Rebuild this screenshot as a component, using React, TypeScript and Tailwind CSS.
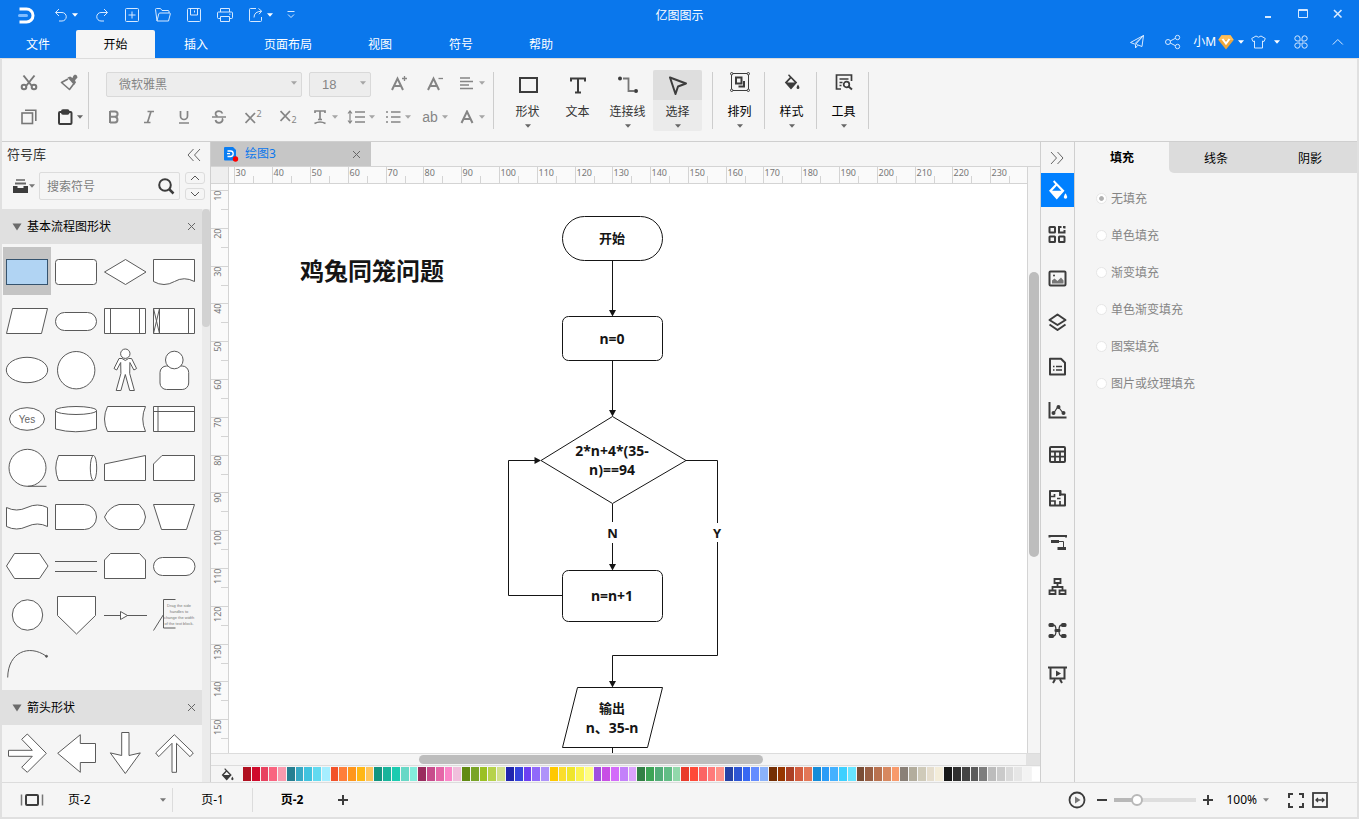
import React, { useState } from "react";
import type { ReactNode } from "react";

const PALETTE = [
  "#b01020", "#cf0a2c", "#e8425f", "#f96480", "#f99aae",
  "#267f91", "#38a9c4", "#41c3df", "#62daf0", "#a6eeff",
  "#f2522a", "#ff7e39", "#ff961c", "#ffb715", "#ffc55b",
  "#139580", "#19b49b", "#1ccbb0", "#67d8c6", "#84ebdc",
  "#9a2c5e", "#c84c8c", "#e566a8", "#fb86c8", "#f0bfdc",
  "#628a13", "#79a428", "#9bc024", "#b6d24c", "#d1e08d",
  "#2025ae", "#3544dc", "#6d40f2", "#9069fa", "#ae92fa",
  "#ffc800", "#fbdd2c", "#efe52c", "#faf350", "#fffd84",
  "#9f4fdf", "#c84fe5", "#d36bfa", "#c380fa", "#dba3fc",
  "#328045", "#3da456", "#52ad78", "#62bd86", "#92d8ab",
  "#e93a2b", "#ff4a38", "#fb6464", "#ff7a7a", "#ff9288",
  "#2542a5", "#2e56d3", "#3768f3", "#648cff", "#8bb2fa",
  "#742f04", "#973600", "#ab4025", "#d35e40", "#e37757",
  "#158cd8", "#2a9cf7", "#44b1ff", "#3dd0ff", "#67e4ff",
  "#7a4d36", "#985f44", "#b97250", "#d78860", "#f89a6c",
  "#8a8077", "#b3ad9d", "#cfcab9", "#e5ddcd", "#f3ecd9",
  "#181818", "#303030", "#444444", "#5a5a5a", "#7d7d7d",
  "#bcbcbc", "#cacaca", "#dadada", "#e6e6e6", "#f3f3f3",
  "#ffffff",
];

type IconProps = { w?: number; h?: number; sw?: number; className?: string; children: ReactNode };

function Icon({ w = 20, h = 20, sw = 2, className = "", children }: IconProps) {
  return (
    <svg
      width={w}
      height={h}
      viewBox={`0 0 ${w} ${h}`}
      fill="none"
      stroke="currentColor"
      strokeWidth={sw}
      className={`shrink-0 ${className}`}
      aria-hidden="true"
    >
      {children}
    </svg>
  );
}

function Caret({ className = "" }: { className?: string }) {
  return (
    <svg width="6" height="4" viewBox="0 0 6 4" className={`shrink-0 ${className}`} aria-hidden="true">
      <path d="M0 0.300h6L3 3.800z" fill="currentColor" />
    </svg>
  );
}

function HeadButton({ label, className = "", children }: { label: string; className?: string; children: ReactNode }) {
  return (
    <button aria-label={label} className={`flex h-7 items-center ${className}`}>
      {children}
    </button>
  );
}

const TABS = [
  { name: "文件", cls: "w-[76px]" },
  { name: "开始", cls: "w-[79px]" },
  { name: "插入", cls: "w-[82px]" },
  { name: "页面布局", cls: "w-[102px]" },
  { name: "视图", cls: "w-[82px]" },
  { name: "符号", cls: "w-20" },
  { name: "帮助", cls: "w-20" },
];

function Header() {
  return (
    <header className="flex h-[58px] shrink-0 bg-[#0a77ec] text-[#d6e9ff]">
      <div className="flex flex-1 flex-col">
        <div className="flex h-[30px] items-center pl-[18px]">
          <svg width="17" height="17" viewBox="0 0 17 17" fill="none" stroke="#fff" strokeWidth="3" aria-hidden="true">
            <path d="M1.500 2H8.500a6.500 6.500 0 0 1 0 13H1.500" strokeLinejoin="round" />
            <path d="M1.500 8.500h7" stroke="#7fbcff" strokeLinecap="round" />
          </svg>
          <HeadButton label="撤销" className="ml-[19px] w-[31px] gap-1">
            <Icon w={14} h={16} sw={1}>
              <path d="M5 2 1.500 5.500 5 9M1.700 5.500H8a4 4 0 0 1 0 8.500H5" />
            </Icon>
            <Caret className="text-white" />
          </HeadButton>
          <HeadButton label="重做" className="w-[34px] justify-center">
            <Icon w={14} h={16} sw={1}>
              <path d="m9 2 3.500 3.500L9 9M12.300 5.500H6a4 4 0 0 0 0 8.500h3" />
            </Icon>
          </HeadButton>
          <HeadButton label="新建" className="w-[26px] justify-center">
            <Icon w={14} h={14} sw={1}>
              <rect x="0.500" y="0.500" width="13" height="13" rx="1" />
              <path d="M7 3.500v7M3.500 7h7" />
            </Icon>
          </HeadButton>
          <HeadButton label="打开" className="w-9 justify-center">
            <Icon w={16} h={14} sw={1}>
              <path d="M2 13 .5 1.500Q.5.500 1.500.500h4l1.500 2h6q1 0 1 1V5M2 13h11.500L15.300 6q.2-1-.8-1H5Q4 5 3.700 6z" />
            </Icon>
          </HeadButton>
          <HeadButton label="保存" className="w-[26px] justify-center">
            <Icon w={14} h={14} sw={1}>
              <rect x="0.500" y="0.500" width="13" height="13" rx="1" />
              <path d="M3.500.500v6.500h7V.500M7.500 2.500v2" />
            </Icon>
          </HeadButton>
          <HeadButton label="打印" className="w-9 justify-center">
            <Icon w={16} h={14} sw={1}>
              <path d="M3.500 4V.500h9V4M3.500 10.500H1.500Q.500 10.500.500 9.500V5Q.500 4 1.500 4h13q1 0 1 1v4.500q0 1-1 1h-2M3.500 8.500h9v5h-9zM12 6.200h1.500" />
            </Icon>
          </HeadButton>
          <HeadButton label="导出" className="w-9 justify-center gap-1">
            <Icon w={14} h={14} sw={1}>
              <path d="M7 .500H1.500q-1 0-1 1v11q0 1 1 1h10q1 0 1-1V9M5 9.500Q5 3.500 12.500 3.200M9.500.500l3.200 2.700L10 6.200" />
            </Icon>
            <Caret className="text-white" />
          </HeadButton>
          <HeadButton label="自定义快速访问" className="w-6 justify-center">
            <Icon w={8} h={8} sw={1}>
              <path d="M.500.500h7M1 3.500l3 3 3-3" />
            </Icon>
          </HeadButton>
        </div>
        <nav className="flex h-7 text-xs text-white">
          {TABS.map((t) => (
            <button
              key={t.name}
              className={`${t.cls} h-7 pt-[2px] ${t.name === "开始" ? "rounded-t-[2px] bg-[#f5f5f5] text-black" : ""}`}
            >
              {t.name}
            </button>
          ))}
        </nav>
      </div>
      <h1 className="flex h-8 items-center text-xs text-white">亿图图示</h1>
      <div className="flex flex-1 flex-col items-end">
        <div className="flex h-7 items-center pr-1">
          <HeadButton label="最小化" className="w-[35px] justify-center">
            <Icon w={10} h={10}>
              <path d="M2 8h6" />
            </Icon>
          </HeadButton>
          <HeadButton label="最大化" className="w-[35px] justify-center">
            <Icon w={10} h={10} sw={1}>
              <path d="M.500.500h9v8h-9zM.500 1.500h9" />
            </Icon>
          </HeadButton>
          <HeadButton label="关闭" className="w-[35px] justify-center">
            <Icon w={10} h={10} sw={1.6}>
              <path d="m1 1 7.500 7.500M8.500 1 1 8.500" />
            </Icon>
          </HeadButton>
        </div>
        <div className="flex h-7 items-center pr-1">
          <HeadButton label="发送" className="w-9 justify-center">
            <Icon w={14} h={14} sw={1}>
              <path d="M13.500.500.500 7.500l4 1.500zM13.500.500l-1.500 11L6.500 9.500M13.500.500l-8 9v3.500l2-2.500" strokeLinejoin="round" />
            </Icon>
          </HeadButton>
          <HeadButton label="分享" className="w-9 justify-center">
            <Icon w={16} h={16} sw={1}>
              <circle cx="3" cy="8" r="2.500" />
              <circle cx="12.500" cy="3.500" r="2.200" />
              <circle cx="12.500" cy="12.500" r="2.200" />
              <path d="m5.200 7 5.200-2.700M5.200 9l5.200 2.700" />
            </Icon>
          </HeadButton>
          <HeadButton label="账户" className="w-[54px] justify-end pr-px text-xs text-white">
            <span>小M</span>
            <svg width="16" height="15" viewBox="0 0 16 15" className="ml-[2px] shrink-0" aria-hidden="true">
              <path d="M3.500.300h9L15.700 5 8 14.500.300 5z" fill="#eea63c" />
              <path d="M3.500.300h9L15.700 5H.300z" fill="#ffbe55" />
              <path d="m4.500 4 3.500 4.500L11.500 4" fill="none" stroke="#fff" strokeWidth="2" />
            </svg>
            <Caret className="ml-1 text-white" />
          </HeadButton>
          <HeadButton label="皮肤" className="w-9 justify-end gap-2 pr-px">
            <Icon w={15} h={14} sw={1}>
              <path d="M5 1 .700 3.500 2 6.500l1.500-.500v7h8v-7l1.500.500 1.300-3L10 1Q7.500 3.500 5 1z" strokeLinejoin="round" />
            </Icon>
            <Caret className="text-white" />
          </HeadButton>
          <HeadButton label="应用" className="w-10 justify-center">
            <Icon w={14} h={14} sw={1}>
              <path d="M6 6H3.200A2.600 2.600 0 1 1 6 3.200zM8 6V3.200A2.600 2.600 0 1 1 10.800 6zM6 8v2.800A2.600 2.600 0 1 1 3.200 8zM8 8h2.800A2.600 2.600 0 1 1 8 10.800z" />
            </Icon>
          </HeadButton>
          <HeadButton label="收起功能区" className="w-[34px] justify-center">
            <Icon w={12} h={8} sw={1}>
              <path d="m.800 6.500 5-5 5 5" />
            </Icon>
          </HeadButton>
        </div>
      </div>
    </header>
  );
}

function Cell({ label, caret, className = "w-[35px] justify-center", children }: { label: string; caret?: boolean; className?: string; children: ReactNode }) {
  return (
    <button aria-label={label} className={`flex h-[34px] items-center gap-1 ${className}`}>
      {children}
      {caret && <Caret className="opacity-70" />}
    </button>
  );
}

function BigTool({ label, caret = true, wide, active, icon }: { label: string; caret?: boolean; wide?: boolean; active?: boolean; icon: ReactNode }) {
  return (
    <button
      className={`flex h-[61px] w-[49px] flex-col items-center rounded-[2px] ${wide ? "text-black" : "text-[#333]"} ${active ? "bg-[#ebebeb]" : ""}`}
    >
      <span className={`flex h-[30px] w-full items-center justify-center rounded-t-[2px] text-[#3c3c3c] ${active ? "bg-[#dedede]" : ""} ${wide ? "pb-[5px]" : ""}`}>
        {icon}
      </span>
      <span className="flex h-6 items-center text-xs whitespace-nowrap">{label}</span>
      {caret && <Caret className="text-[#666]" />}
    </button>
  );
}

function Divider() {
  return <span className="h-[57px] w-px bg-[#cdcdcd]" />;
}

function Toolbar() {
  return (
    <div className="flex h-[84px] shrink-0 items-center border-t border-b border-t-[#dcdcdc] border-b-[#cfcfcf] bg-[#f5f5f5]">
      <div className="grid grid-cols-[40px_39px] pl-[7px] text-[#777]">
        <Cell label="剪切" className="w-10 justify-center">
          <Icon w={18} h={18}>
            <path d="M3.500 1.500 11.500 11.500M14.500 1.500l-8 10" />
            <circle cx="4" cy="13" r="2.300" />
            <circle cx="14" cy="13" r="2.300" />
          </Icon>
        </Cell>
        <Cell label="格式刷" className="w-10 justify-center">
          <Icon w={18} h={18}>
            <path d="M8 5 1.500 8.500 9.500 15.500l4.500-6" strokeWidth="1.600" strokeLinejoin="round" />
            <path d="m7.500 3.500 2.700-1 2.300 1.500Q13 1 15 .500q2.500.500 2.500 3L15 6.200l1 2.300-2 2.500z" fill="currentColor" stroke="none" />
          </Icon>
        </Cell>
        <Cell label="复制" className="w-10 justify-center">
          <Icon w={16} h={16} sw={1.6}>
            <rect x="1" y="4" width="10.500" height="10.500" />
            <path d="M4 1.200h10.800V12" />
          </Icon>
        </Cell>
        <Cell label="粘贴" className="w-10 pl-[9px] text-[#3c3c3c]">
          <Icon w={15} h={16}>
            <rect x="1" y="3" width="12.500" height="12" rx="1" />
            <rect x="4" y="1.200" width="6.500" height="3.500" rx="1" />
          </Icon>
          <Caret className="text-[#666]" />
        </Cell>
      </div>
      <Divider />
      <div className="flex w-[404px] flex-col pl-[7px] text-[#858585]">
        <div className="flex h-[34px] items-center">
          <label className="relative ml-[10px] block h-[25px] w-[196px]">
            <select aria-label="字体" className="h-full w-full appearance-none rounded-[2px] border border-[#d9d9d9] bg-[#ededed] pl-3 text-xs text-[#858585]">
              <option>微软雅黑</option>
            </select>
            <Caret className="pointer-events-none absolute top-[10px] right-[5px] text-[#a5a5a5]" />
          </label>
          <label className="relative ml-[7px] block h-[25px] w-[62px]">
            <select aria-label="字号" className="h-full w-full appearance-none rounded-[2px] border border-[#d9d9d9] bg-[#ededed] pl-3 font-['Liberation_Sans',sans-serif] text-[13px] text-[#858585]">
              <option>18</option>
            </select>
            <Caret className="pointer-events-none absolute top-[10px] right-[5px] text-[#a5a5a5]" />
          </label>
          <Cell label="增大字号" className="ml-[10px] w-9 justify-center">
            <Icon w={18} h={16}>
              <path d="M2 15 7.500 3.500 13 15M4 11h7" />
              <path d="M14.500 1v5M12 3.500h5" strokeWidth="1.300" />
            </Icon>
          </Cell>
          <Cell label="减小字号" className="w-9 justify-center">
            <Icon w={18} h={16}>
              <path d="M2 15 7.500 3.500 13 15M4 11h7" />
              <path d="M12.500 3.500h4.500" strokeWidth="1.300" />
            </Icon>
          </Cell>
          <Cell label="对齐" caret className="ml-[2px] w-[37px] pl-1">
            <Icon w={16} h={14}>
              <path d="M1 2h10M1 5.500h13M1 9h9M1 12.500h13" strokeWidth="1.600" />
            </Icon>
          </Cell>
        </div>
        <div className="flex h-[34px] items-center">
          <Cell label="加粗">
            <Icon w={12} h={14}>
              <path d="M2 1v12M2 1.500h5a2.600 2.600 0 0 1 0 5.200H2M7 6.700a3 3 0 0 1 0 5.900H2" />
            </Icon>
          </Cell>
          <Cell label="斜体">
            <Icon w={12} h={14} sw={1.7}>
              <path d="M4.500 1.500H11M1 12.500h6.500M8 1.500l-3.500 11" />
            </Icon>
          </Cell>
          <Cell label="下划线">
            <Icon w={12} h={14} sw={1.7}>
              <path d="M2.500 1v5a3.500 3.500 0 0 0 7 0V1M1 13h10" />
            </Icon>
          </Cell>
          <Cell label="删除线">
            <Icon w={14} h={14} sw={1.7}>
              <path d="M10.500 3.500Q9.500 1.200 7 1.200 3.500 1.200 3.500 4q0 1.500 2 2.300M0 7h14M3.500 10q.500 2.800 3.500 2.800T10.700 10q0-1-.7-1.700" />
            </Icon>
          </Cell>
          <Cell label="上标">
            <span className="flex items-start">
              <Icon w={11} h={16} sw={1.8}>
                <path d="m.500 4 9.500 10M10 4 .500 14" />
              </Icon>
              <span className="text-[9px] leading-[10px]">2</span>
            </span>
          </Cell>
          <Cell label="下标">
            <span className="flex items-end">
              <Icon w={11} h={16} sw={1.8}>
                <path d="m.500 2 9.500 10M10 2 .500 12" />
              </Icon>
              <span className="text-[9px] leading-[10px]">2</span>
            </span>
          </Cell>
          <Cell label="文字方向" caret className="w-[37px] pl-[7px]">
            <Icon w={15} h={16} sw={1.7}>
              <path d="M2 4V2h10v2M7 2v8.500M5 10.500h4M1.500 14.500q5.500-3 11 0" />
            </Icon>
          </Cell>
          <Cell label="行距" caret className="w-[37px] pl-1">
            <Icon w={18} h={14} sw={1.7}>
              <path d="M8 2h10M8 7h10M8 12h10" />
              <path d="M3 1v12M1 3.500l2-2.500 2 2.500M1 10.500 3 13l2-2.500" strokeWidth="1.200" />
            </Icon>
          </Cell>
          <Cell label="项目符号" caret className="w-[37px] pl-[6px]">
            <Icon w={15} h={14} sw={1.7}>
              <path d="M0 2h2M0 7h2M0 12h2M5 2h9.500M5 7h9.500M5 12h9.500" />
            </Icon>
          </Cell>
          <Cell label="突出显示" caret className="w-[37px] pl-[5px]">
            <span className="w-4 font-['Liberation_Sans',sans-serif] text-sm">ab</span>
          </Cell>
          <Cell label="字体颜色" caret className="w-[37px] pl-[6px]">
            <Icon w={15} h={14}>
              <path d="M1.500 13 7 1.500 12.500 13M3.500 9h7" />
            </Icon>
          </Cell>
        </div>
      </div>
      <Divider />
      <div className="flex gap-px pr-[10px] pl-[9px]">
        <BigTool label="形状" icon={<Icon w={20} h={20}><rect x="2" y="3" width="17" height="14" /></Icon>} />
        <BigTool label="文本" caret={false} icon={<Icon w={20} h={20}><path d="M3 6.500V3.500h14v3M10 3.500v14M7 17.500h6" /></Icon>} />
        <BigTool
          label="连接线"
          icon={
            <Icon w={20} h={20}>
              <path d="M5 3.500h5.500v12.500H16" stroke="#777" strokeWidth="1.800" />
              <circle cx="2" cy="3.500" r="2" fill="currentColor" stroke="none" />
              <circle cx="18" cy="16" r="2" fill="currentColor" stroke="none" />
            </Icon>
          }
        />
        <BigTool label="选择" active icon={<Icon w={20} h={20}><path d="m2 2.500 16 6-8 3L7.500 19z" strokeLinejoin="round" /></Icon>} />
      </div>
      <Divider />
      <div className="flex items-center">
        <div className="pl-[2px]">
          <BigTool
            wide
            label="排列"
            icon={
              <Icon w={20} h={20} sw={1}>
                <path d="M1.500 1.500h17v17h-17z" />
                <path d="M6 5.500h5.500v6H6zM14 9v5.500H8.500" strokeWidth="2" />
                <g fill="#f5f5f5">
                  <circle cx="1.700" cy="1.700" r="1.200" />
                  <circle cx="18.300" cy="1.700" r="1.200" />
                  <circle cx="1.700" cy="18.300" r="1.200" />
                  <circle cx="18.300" cy="18.300" r="1.200" />
                </g>
              </Icon>
            }
          />
        </div>
        <Divider />
        <div className="pl-[2px]">
          <BigTool wide label="样式" icon={<Bucket />} />
        </div>
        <Divider />
        <div className="pl-[2px]">
          <BigTool
            wide
            label="工具"
            icon={
              <Icon w={18} h={18}>
                <path d="M6 16H1.500V2h15v6M4.500 6h9M4.500 9.500h3M4.500 12.500h2" strokeWidth="1.700" />
                <circle cx="11.500" cy="11.500" r="2.800" strokeWidth="1.700" />
                <path d="m13.500 13.500 3.500 3" />
              </Icon>
            }
          />
        </div>
        <Divider />
      </div>
    </div>
  );
}

function Bucket({ size = 16 }: { size?: number }) {
  return (
    <svg width={size} height={size} viewBox="0 0 16 16" className="shrink-0" aria-hidden="true">
      <path
        fillRule="evenodd"
        d="M5 .200 13.200 8.500 7 15.500.800 8.500 5.800 3.300 4 1.300zM7 4.600 3.300 8.500h7.400z"
        fill="currentColor"
      />
      <path d="M14 10.500q2.800 4 0 4.500-2.800-.500 0-4.500z" fill="currentColor" />
    </svg>
  );
}

const SHAPES: { name: string; art: ReactNode }[] = [
  { name: "流程", art: <rect x="3.500" y="12.500" width="41" height="25" fill="#b1d4f3" stroke="#35536e" /> },
  { name: "圆角矩形", art: <rect x="3.500" y="12.500" width="41" height="25" rx="3" /> },
  { name: "判定", art: <path d="M3.500 25 24.500 12.500 45 25 24.500 37.500z" /> },
  { name: "文档", art: <path d="M3.500 34.500v-22h41v22Q34 29 24.500 34.500 14 40.500 3.500 34.500z" /> },
  { name: "数据", art: <path d="M9.500 12.500h35l-6 25h-35z" /> },
  { name: "开始/结束", art: <rect x="3.500" y="16.500" width="41" height="18" rx="9" /> },
  { name: "预定义流程", art: <path d="M3.500 12.500h41v25h-41zM9.500 12.500v25M38.500 12.500v25" /> },
  { name: "子流程", art: <path d="M3.500 12.500h41v25h-41zM9.500 12.500v25M38.500 12.500v25M3.500 12.500l6 25M9.500 12.500l-6 25" /> },
  { name: "椭圆", art: <ellipse cx="24" cy="25" rx="20.700" ry="12.700" /> },
  { name: "圆", art: <circle cx="24.200" cy="25.200" r="18.700" /> },
  {
    name: "人物",
    art: (
      <>
        <circle cx="24.300" cy="8.700" r="4.700" />
        <path d="M18 13.500h3l3.300 2 3.300-2h3l5 10-2.700 1.500-4-7.500-.200 11 4.700 17h-4.700l-4.400-16-4.400 16h-4.700l4.700-17-.200-11-4 7.500-2.700-1.500z" />
      </>
    ),
  },
  {
    name: "角色",
    art: (
      <>
        <rect x="10" y="21" width="28.700" height="23.500" rx="6.500" />
        <circle cx="24.300" cy="15" r="8.800" />
      </>
    ),
  },
  {
    name: "是",
    art: (
      <>
        <ellipse cx="24" cy="25" rx="17.500" ry="11.300" />
        <text x="24" y="28.500" fontSize="10" textAnchor="middle" fill="#666" stroke="none" className="font-['Liberation_Sans',sans-serif]">Yes</text>
      </>
    ),
  },
  {
    name: "数据库",
    art: (
      <>
        <path d="M3.500 16.500V35q20 5.500 41 0V16.500" />
        <ellipse cx="24" cy="16.500" rx="20.500" ry="4" />
      </>
    ),
  },
  { name: "存储数据", art: <path d="M6.500 12.500h38q-5.500 12.500 0 25h-38q-6-12.500 0-25z" /> },
  { name: "内部存储", art: <path d="M3.500 12.500h41v25h-41zM3.500 17.500h41M8 12.500v25" /> },
  { name: "顺序数据", art: <><circle cx="24.500" cy="24.800" r="18.500" /><path d="M24.500 43.300h19" /></> },
  { name: "直接数据", art: <><path d="M41.500 12.500h-35q-5.500 12.500 0 25h35" /><ellipse cx="41.500" cy="25" rx="3.200" ry="12.500" /></> },
  { name: "手动输入", art: <path d="M3.500 21 44.500 12.500v25h-41z" /> },
  { name: "卡片", art: <path d="M12 12.500h32.500v25h-41V21z" /> },
  { name: "纸带", art: <path d="M3.500 15.500q10 5 20.500 0t20.500 0v19q-10-5-20.500 0t-20.500 0z" /> },
  { name: "延迟", art: <path d="M3.500 12.500h29a12 12.500 0 0 1 0 25h-29z" /> },
  { name: "显示", art: <path d="M18 12.500h20q13 12.500 0 25H18Q8 35 3.500 25 8 15 18 12.500z" /> },
  { name: "手动操作", art: <path d="M3.500 12.500h41l-8 25H11.500z" /> },
  { name: "准备", art: <path d="M11.500 12.500h25L45 25l-8.500 12.500h-25L3.500 25z" /> },
  { name: "并行模式", art: <path d="M3 20.500h42M3 30.500h42" /> },
  { name: "循环限值", art: <path d="M9.500 12.500h29l6 6.500v18.500h-41V19z" /> },
  { name: "终端", art: <rect x="3.500" y="16.500" width="41.500" height="18" rx="9" /> },
  { name: "连接点", art: <circle cx="24.500" cy="25" r="15.200" /> },
  { name: "跨页引用", art: <path d="M5.500 6.500h38v19l-19 18.500-19-18.500z" /> },
  { name: "流向", art: <path d="M3 25.500h16.500M26 25.500h20M19.500 21.500l7 4-7 4z" /> },
  {
    name: "批注",
    art: (
      <>
        <path d="M25.500 9.500h-12v28.500h12M13.500 24.500l-10 16" fill="none" />
        <g fontSize="4" textAnchor="middle" fill="#777" stroke="none" className="font-['Liberation_Sans',sans-serif]">
          <text x="29" y="17">Drag the side</text>
          <text x="29" y="23">handles to</text>
          <text x="29" y="28.500">change the width</text>
          <text x="29" y="34.500">of the text block.</text>
        </g>
      </>
    ),
  },
  { name: "弧线", art: <><path d="M4.700 38.500C5 13 26 5 43 17" fill="none" /><circle cx="43.500" cy="17.300" r="1" fill="#555" /></> },
];

const ARROWS: { name: string; art: ReactNode }[] = [
  { name: "右箭头", art: <path d="M5.500 22.300h23.800l-10.600-11 5.600-5.300 19 19.300-19 19-5.600-5 10.600-11H5.500z" /> },
  { name: "左箭头", art: <path d="M5.700 25.300 28.300 6.700v8.800h15.200v19H28.300v9.800z" /> },
  { name: "下箭头", art: <path d="M20.700 4.500H28v23l11.300-2.600-15 20.600-15-20.600 11.400 2.600z" /> },
  { name: "上箭头", art: <path d="M24.300 6.700 43.300 25 40 28.700 26.500 15.300v29h-4.500v-29L8.700 28.700 5.700 25z" /> },
];

function ShapeGrid({ items, selected }: { items: { name: string; art: ReactNode }[]; selected?: string }) {
  return (
    <div className="grid grid-cols-[49px_49px_49px_49px] pt-[3px] pb-[2px] pl-px">
      {items.map((s) => (
        <button key={s.name} aria-label={s.name} className="flex h-[49px]">
          <svg
            width="48"
            height="48"
            viewBox="0 0 48 48"
            fill="#fff"
            stroke="#5a5a5a"
            className={s.name === selected ? "bg-[#c4c4c4]" : ""}
            aria-hidden="true"
          >
            {s.art}
          </svg>
        </button>
      ))}
    </div>
  );
}

function GroupTitle({ name }: { name: string }) {
  return (
    <div className="flex h-[35px] items-center bg-[#e0e0e0] pr-[6px] pl-[10px] text-xs text-black">
      <svg width="10" height="8" viewBox="0 0 10 8" className="mr-[5px]" aria-hidden="true">
        <path d="M.500.500h9L5 7.500z" fill="#6b6b6b" />
      </svg>
      <h2 className="flex-1">{name}</h2>
      <button aria-label={`关闭${name}`} className="text-[#666]">
        <Icon w={9} h={9} sw={1}>
          <path d="m1 1 7 7M8 1 1 8" />
        </Icon>
      </button>
    </div>
  );
}

function Library() {
  return (
    <aside className="flex w-[209px] shrink-0 flex-col border-r border-[#cfcfcf]">
      <div className="flex h-[26px] items-center justify-between pr-[9px] pl-[5px] text-[13px] text-[#333]">
        <span>符号库</span>
        <button aria-label="收起符号库" className="text-[#666]">
          <Icon w={14} h={14} sw={1}>
            <path d="M6.500 1 1 7l5.500 6M13 1 7.500 7l5.500 6" />
          </Icon>
        </button>
      </div>
      <div className="flex h-[41px] shrink-0 items-start pt-1 pr-[5px] pl-[11px]">
        <button aria-label="符号库列表" className="flex h-7 w-[26px] items-center gap-px text-[#3c3c3c]">
          <Icon w={15} h={14} sw={2}>
            <path d="M3 1h9" stroke="#888" />
            <path d="M2 4.500h11" stroke="#666" />
            <path d="M0 7h4.500v2h6V7H15v7H0z" fill="currentColor" stroke="none" />
          </Icon>
          <Caret className="text-[#777]" />
        </button>
        <div className="flex h-7 flex-1 items-center rounded-[2px] border border-[#dcdcdc] pr-1 pl-[7px]">
          <input aria-label="搜索符号" placeholder="搜索符号" className="w-0 flex-1 bg-transparent pt-[2px] text-xs outline-none placeholder:text-[#7d7d7d]" />
          <Icon w={18} h={18} sw={2} className="text-[#3c3c3c]">
            <circle cx="8" cy="8" r="5.800" />
            <path d="m12 12 4.500 4.500" strokeWidth="2.500" />
          </Icon>
        </div>
        <div className="ml-[5px] flex w-5 flex-col gap-1">
          <button aria-label="上一个" className="flex h-3 items-center justify-center rounded-[3px] border border-[#dcdcdc] text-[#555]">
            <Icon w={10} h={6} sw={1}><path d="m1 5 4-4 4 4" /></Icon>
          </button>
          <button aria-label="下一个" className="flex h-3 items-center justify-center rounded-[3px] border border-[#dcdcdc] text-[#555]">
            <Icon w={10} h={6} sw={1}><path d="m1 1 4 4 4-4" /></Icon>
          </button>
        </div>
      </div>
      <div className="flex min-h-0 flex-1">
        <div className="min-h-0 flex-1 overflow-hidden">
          <GroupTitle name="基本流程图形状" />
          <ShapeGrid items={SHAPES} selected="流程" />
          <GroupTitle name="箭头形状" />
          <ShapeGrid items={ARROWS} />
        </div>
        <div className="w-2 bg-[#ebebeb]">
          <div className="h-[118px] rounded-full bg-[#d2d2d2]" />
        </div>
      </div>
    </aside>
  );
}

const TICK = 37.8;

function HorizontalRuler() {
  const marks = Array.from({ length: 21 }, (_, i) => i);
  return (
    <svg width="100%" height="16" className="block text-[#777]" aria-hidden="true">
      {marks.map((i) => {
        const x = Math.round(5.3 + i * TICK) + 0.5;
        return (
          <g key={i}>
            <path d={`M${x} 0v16M${x + 19} 9v7`} stroke="#d4d4d4" />
            <text x={x + 1} y="9" fontSize="9" fill="currentColor">{30 + i * 10}</text>
          </g>
        );
      })}
    </svg>
  );
}

function VerticalRuler() {
  const marks = Array.from({ length: 15 }, (_, i) => i);
  return (
    <svg width="17" height="100%" className="block text-[#777]" aria-hidden="true">
      {marks.map((i) => {
        const y = Math.round(6 + i * TICK) + 0.5;
        return (
          <g key={i}>
            <path d={`M0 ${y}h17M10 ${y + 19}h7`} stroke="#d4d4d4" />
            <text transform={`translate(10 ${y}) rotate(-90)`} textAnchor="end" fontSize="9" fill="currentColor">
              {10 + i * 10}
            </text>
          </g>
        );
      })}
    </svg>
  );
}

function Diagram() {
  return (
    <svg width="798" height="569" viewBox="229 184 798 569" className="block" role="img" aria-label="鸡兔同笼问题流程图">
      <text x="300" y="280" fontSize="24" fontWeight="700" fill="#151515">鸡兔同笼问题</text>
      <g fill="none" stroke="#151515" strokeWidth="1">
        <rect x="562.500" y="216.500" width="100" height="44" rx="22" />
        <rect x="562.500" y="316.500" width="100" height="44" rx="6" />
        <path d="M541 460.500 612.500 416.500 686 460.500 612.500 503.500z" />
        <rect x="562.500" y="570.500" width="100" height="51" rx="6" />
        <path d="M577.500 687.500h85l-15 60h-85z" />
        <path d="M612.500 261v50M612.500 361v50M612.500 504v18M612.500 543v22M612.500 748v6" />
        <path d="M562 595.500h-53.500v-135H536" />
        <path d="M686 460.500h31.500V523M717.500 542v113.500h-105V682" />
      </g>
      <g fill="#151515">
        <path d="M609 310h7l-3.500 6.500zM609 410h7l-3.500 6.500zM609 564h7l-3.500 6.500zM609 681h7l-3.500 6.500zM534.500 457v7l6.500-3.500z" />
      </g>
      <g fontWeight="700" fill="#151515" textAnchor="middle">
        <g fontSize="13">
          <text x="612" y="243">开始</text>
          <text x="612.500" y="538">N</text>
          <text x="717" y="538">Y</text>
          <text x="612" y="713">输出</text>
        </g>
        <g fontSize="14">
          <text x="612" y="344">n=0</text>
          <text x="612" y="456">2*n+4*(35-</text>
          <text x="612" y="475">n)==94</text>
          <text x="612" y="601">n=n+1</text>
          <text x="612" y="733">n、35-n</text>
        </g>
      </g>
    </svg>
  );
}

function Workspace() {
  return (
    <main className="flex min-w-0 flex-1 flex-col">
      <div className="flex h-6 shrink-0">
        <div className="flex w-40 items-center bg-[#c6c6c6] pr-[10px] pl-[13px] text-xs">
          <svg width="15" height="16" viewBox="0 0 15 16" className="mr-[6px] shrink-0" aria-hidden="true">
            <path d="M0 2Q0 1 1 1h8l3 3v9.500q0 1-1 1H1q-1 0-1-1z" fill="#0a7df2" />
            <path d="M3.500 5h3q2.700 0 2.700 2.700T6.500 10.500h-3M3 7.700h3" fill="none" stroke="#fff" strokeWidth="1.300" />
            <circle cx="11.500" cy="13" r="2.700" fill="#f00" />
          </svg>
          <span className="flex-1 text-[#0a77ec]">绘图3</span>
          <button aria-label="关闭绘图3" className="text-[#666]">
            <Icon w={9} h={9} sw={1}>
              <path d="m1 1 7 7M8 1 1 8" />
            </Icon>
          </button>
        </div>
      </div>
      <div className="flex min-h-0 flex-1 border-t border-[#d4d4d4]">
        <div className="flex min-w-0 flex-1 flex-col">
          <div className="flex h-[17px] shrink-0 border-b border-[#d4d4d4] bg-[#fafafa]">
            <div className="w-[18px] shrink-0 border-r border-[#d4d4d4] bg-[#eee]" />
            <div className="min-w-0 flex-1 overflow-hidden">
              <HorizontalRuler />
            </div>
          </div>
          <div className="flex min-h-0 flex-1">
            <div className="w-[18px] shrink-0 overflow-hidden border-r border-[#d4d4d4] bg-[#fafafa]">
              <VerticalRuler />
            </div>
            <div className="min-w-0 flex-1 overflow-hidden bg-white">
              <Diagram />
            </div>
          </div>
        </div>
        <div className="flex w-[13px] shrink-0 flex-col items-center border-l border-[#d4d4d4]">
          <div className="mt-[105px] h-[285px] w-[10px] rounded-full bg-[#bdbdbd]" />
        </div>
      </div>
      <div className="flex h-[13px] shrink-0 border-t border-b border-[#dcdcdc]">
        <div className="flex flex-1 items-center pl-[208px]">
          <div className="h-[9px] w-[344px] rounded-full bg-[#bdbdbd]" />
        </div>
        <div className="w-[14px] bg-[#e2e2e2]" />
      </div>
      <div className="flex h-4 shrink-0 items-center">
        <button aria-label="填充颜色" className="flex w-8 justify-center text-[#3c3c3c]">
          <Bucket size={13} />
        </button>
        <div className="flex h-[14px] flex-1 gap-px">
          {PALETTE.map((c) => (
            <button key={c} aria-label={c} className="flex-1" style={{ backgroundColor: c }} />
          ))}
        </div>
      </div>
    </main>
  );
}

const SIDE_TOOLS: { name: string; art: ReactNode }[] = [
  {
    name: "主题",
    art: (
      <>
        <rect x="1.500" y="2" width="5.500" height="5.500" rx="0.500" />
        <rect x="1.500" y="11.500" width="5.500" height="5.500" rx="0.500" />
        <rect x="11" y="11.500" width="5.500" height="5.500" rx="0.500" />
        <path d="M13.500 2H11v5.500h5.500V5M15 2h2.500M16.500 1v2.500" />
      </>
    ),
  },
  { name: "图片", art: <><rect x="1.500" y="2.500" width="16" height="14" rx="1" /><path d="M4 14.500v-3l2.500-2 3 2.500 3.500-3.500 2.500 3v3z" fill="#777" stroke="none" /><circle cx="6" cy="6.500" r="1" fill="currentColor" stroke="none" /></> },
  { name: "图层", art: <path d="M9.500 1.500 17.500 7l-8 5-8-5zM1.500 11.500l8 5.500 8-5.500" strokeLinejoin="round" /> },
  { name: "备注", art: <><path d="M2 1.800h11l4 4V17.500H2z" strokeLinejoin="round" /><path d="M5 9.500h1.500M5 13h1.500M8 9.500h6M8 13h6" strokeWidth="1.500" /></> },
  { name: "图表", art: <><path d="M1.500 1v15.500H18.500" /><path d="m5.500 12.500 4.500-7 5.500 7" strokeWidth="1.200" /><g fill="currentColor" stroke="none"><circle cx="5.500" cy="12" r="2" /><circle cx="10.500" cy="6" r="2" /><circle cx="15.500" cy="12" r="2" /></g></> },
  { name: "表格", art: <><rect x="2" y="2" width="15" height="15" rx="1" /><path d="M2 6.500h15M2 11.700h15M7 6.500V17M12 6.500V17" strokeWidth="1.800" /></> },
  { name: "平面图", art: <><path d="M2 2h10.500v3.500H17v11H2z" strokeLinejoin="round" /><path d="M2 7.500h4.500V5M2 12h5v4M12 2v5M12 12v4M9 9.500h3.500" strokeWidth="1.700" /></> },
  { name: "甘特图", art: <><path d="M1.500 4.500V3h16.500v1.500" /><path d="M3 8.500h8M9.500 15.500H18" strokeWidth="3" /><path d="M11 8.500h4.500v7" strokeWidth="1" /></> },
  { name: "组织结构", art: <path d="M6.500 2h6v4h-6zM9.500 6v4M4.500 13v-3h10v3M1.500 13.500h6V17h-6zM11.500 13.500h6V17h-6z" strokeWidth="1.800" /> },
  { name: "思维导图", art: <><g fill="currentColor" stroke="none"><rect x="0.500" y="2" width="5.500" height="4" rx="1.500" /><rect x="13" y="2" width="5.500" height="4" rx="1.500" /><rect x="0.500" y="13" width="5.500" height="4" rx="1.500" /><rect x="13" y="13" width="5.500" height="4" rx="1.500" /><rect x="6.500" y="8" width="6" height="3" rx="1" /></g><path d="M5.500 4q2.500 0 2.500 5.500T5.500 15M13.500 4Q11 4 11 9.500t2.500 5.500" strokeWidth="1.300" /></> },
  { name: "演示", art: <><path d="M0 2.500h19M2.500 2.500v11h14v-11M7 14.500l-2 3.500M12 14.500l2 3.500" /><path d="m8 5.500 5 3-5 3z" fill="currentColor" stroke="none" /></> },
];

function SideTools() {
  return (
    <div className="flex w-[35px] shrink-0 flex-col border-x border-[#cfcfcf] text-[#3c3c3c]">
      <button aria-label="收起面板" className="flex h-[31px] shrink-0 items-center justify-center pr-[2px] text-[#666]">
        <Icon w={14} h={14} sw={1}>
          <path d="m1 1 5.500 6L1 13M7.500 1 13 7l-5.500 6" />
        </Icon>
      </button>
      <button aria-label="样式" className="flex h-[34px] shrink-0 items-center justify-center bg-[#0080ff] text-white">
        <Bucket size={20} />
      </button>
      <div className="flex flex-col pt-[5px]">
        {SIDE_TOOLS.map((t) => (
          <button key={t.name} aria-label={t.name} className="flex h-11 items-center justify-center">
            <Icon w={19} h={19} sw={2}>{t.art}</Icon>
          </button>
        ))}
      </div>
    </div>
  );
}

const FILLS = ["无填充", "单色填充", "渐变填充", "单色渐变填充", "图案填充", "图片或纹理填充"];

function FormatPanel() {
  const [fill, setFill] = useState("无填充");
  return (
    <aside className="w-[282px] shrink-0">
      <div className="flex h-[31px] text-xs text-black">
        <button className="flex-1 font-bold">填充</button>
        <button className="flex-1 rounded-bl-[5px] bg-[#dcdcdc] pt-[2px]">线条</button>
        <button className="flex-1 bg-[#dcdcdc] pt-[2px]">阴影</button>
      </div>
      <div className="flex flex-col pt-[7px] pl-[21px]">
        {FILLS.map((f) => (
          <label key={f} className="flex h-[37px] items-center gap-1 text-xs text-[#858585]">
            <input
              type="radio"
              name="fill"
              checked={fill === f}
              onChange={() => setFill(f)}
              className="size-[11px] appearance-none rounded-full border border-[#e6e6e6] bg-white checked:bg-[radial-gradient(circle,#b0b0b0_30%,#fff_45%)]"
            />
            {f}
          </label>
        ))}
      </div>
    </aside>
  );
}

function StatusBar() {
  const [zoom, setZoom] = useState(23);
  return (
    <footer className="flex h-[35px] shrink-0 items-center border-t border-[#dcdcdc] text-xs text-black">
      <button aria-label="页面视图" className="ml-[18px] text-[#3c3c3c]">
        <Icon w={24} h={14} sw={2}>
          <path d="M1.500 1.500v11M22.500 1.500v11" stroke="#777" strokeWidth="1.500" />
          <rect x="6" y="2" width="12" height="10" rx="1" />
        </Icon>
      </button>
      <label className="relative ml-6 block w-[104px]">
        <select aria-label="页面" className="w-full appearance-none bg-transparent">
          <option>页-2</option>
        </select>
        <Caret className="pointer-events-none absolute top-[6px] right-[6px] text-[#777]" />
      </label>
      <button className="h-6 w-[81px] border-x border-[#dcdcdc]">页-1</button>
      <button className="h-6 w-[78px] font-bold">页-2</button>
      <button aria-label="新建页面" className="flex w-6 justify-center text-[#3c3c3c]">
        <Icon w={10} h={10}><path d="M5 0v10M0 5h10" /></Icon>
      </button>
      <div className="flex flex-1 items-center justify-end pr-[29px] text-[#3c3c3c]">
        <button aria-label="播放">
          <Icon w={18} h={18} sw={1.8}>
            <circle cx="9" cy="9" r="7.500" />
            <path d="m7 5.500 5.500 3.500L7 12.500z" fill="#777" stroke="none" />
          </Icon>
        </button>
        <button aria-label="缩小" className="ml-[11px]">
          <Icon w={10} h={10}><path d="M0 5h10" /></Icon>
        </button>
        <input
          type="range"
          aria-label="缩放"
          value={zoom}
          onChange={(e) => setZoom(Number(e.target.value))}
          className="mx-[7px] h-3 w-[82px] appearance-none bg-[linear-gradient(to_right,#b8b8b8_27%,#dedede_27%)] bg-[length:100%_4px] bg-center bg-no-repeat [&::-webkit-slider-thumb]:size-3 [&::-webkit-slider-thumb]:appearance-none [&::-webkit-slider-thumb]:rounded-full [&::-webkit-slider-thumb]:border-2 [&::-webkit-slider-thumb]:border-[#b8b8b8] [&::-webkit-slider-thumb]:bg-white"
        />
        <button aria-label="放大">
          <Icon w={10} h={10}><path d="M5 0v10M0 5h10" /></Icon>
        </button>
        <button className="ml-[13px] flex items-center gap-[6px] text-black">
          100%
          <Caret className="text-[#888]" />
        </button>
        <button aria-label="适应页面" className="ml-[19px]">
          <Icon w={16} h={15}><path d="M1 5V1h4M11 1h4v4M15 10v4h-4M5 14H1v-4" /></Icon>
        </button>
        <button aria-label="适应宽度" className="ml-2">
          <Icon w={16} h={16} sw={1.8}>
            <rect x="1" y="1" width="14" height="14" />
            <path d="M4 8h8M6 6 4 8l2 2M10 6l2 2-2 2" strokeWidth="1.300" />
          </Icon>
        </button>
      </div>
    </footer>
  );
}

export default function App() {
  return (
    <div className="flex h-screen min-w-[1200px] flex-col overflow-hidden bg-[#e0e0e0] font-['Noto_Sans','Noto_Sans_CJK_SC',sans-serif]">
      <Header />
      <div className="mx-[2px] mb-[2px] flex min-h-0 flex-1 flex-col bg-[#f5f5f5]">
        <Toolbar />
        <div className="flex min-h-0 flex-1">
          <Library />
          <Workspace />
          <SideTools />
          <FormatPanel />
        </div>
        <StatusBar />
      </div>
    </div>
  );
}
